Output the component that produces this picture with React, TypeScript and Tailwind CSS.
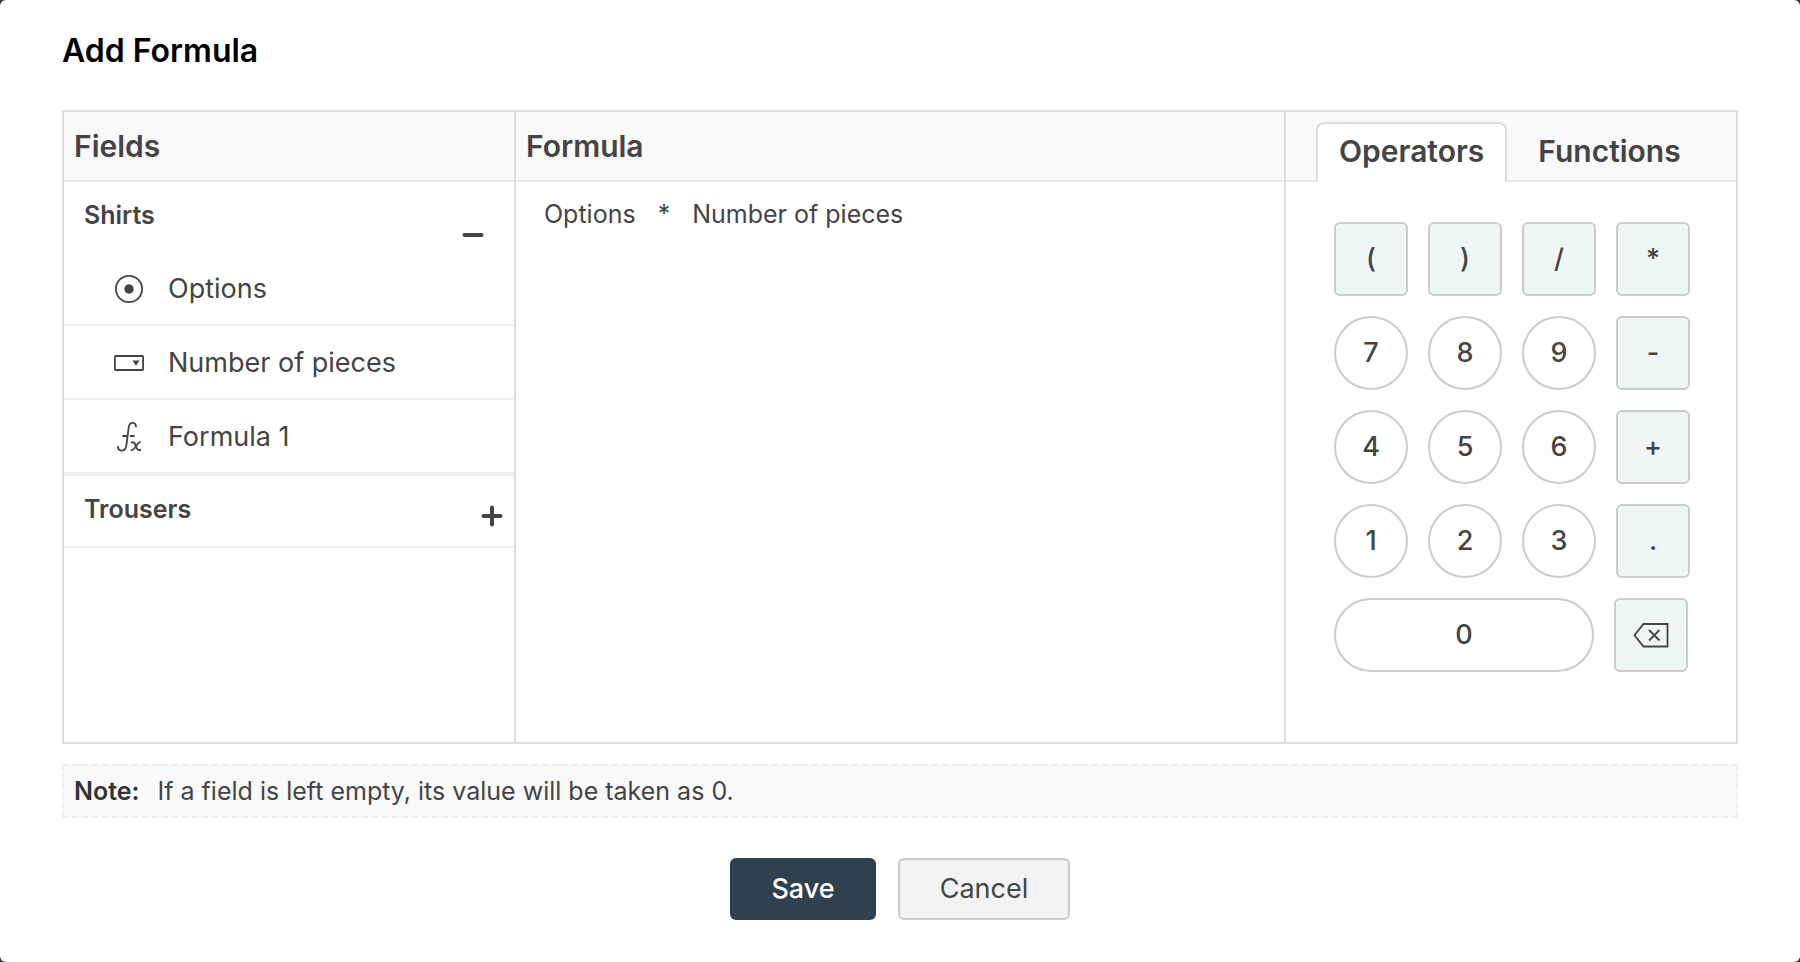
import React, { useState } from 'react';
import clsx from 'clsx';

interface Field {
  name: string;
  icon: React.ReactNode;
}

interface FieldGroup {
  name: string;
  fields: Field[];
}

const RadioIcon = () => (
  <svg width="30" height="30" viewBox="0 0 30 30" fill="none" aria-hidden="true">
    <circle cx="15" cy="15" r="13.1" stroke="currentColor" strokeWidth="1.8" />
    <circle cx="15" cy="15" r="4.7" fill="currentColor" />
  </svg>
);

const DropdownIcon = () => (
  <svg width="30" height="30" viewBox="0 0 30 30" fill="none" aria-hidden="true">
    <rect x="0.9" y="8" width="28.2" height="14" rx="0.8" stroke="currentColor" strokeWidth="1.8" />
    <path d="M18.4 12.4h7.2L22 17.8z" fill="currentColor" />
  </svg>
);

const FormulaIcon = () => (
  <svg width="30" height="30" viewBox="0 0 30 30" fill="none" stroke="currentColor" strokeLinecap="round" aria-hidden="true">
    <path d="M22 4.400c0-2.100-1.300-3.500-3.400-3.500-2.500 0-3.500 1.700-3.900 4.500l-2.200 17c-.5 3.900-1.500 6.200-4.400 6.200-2.600 0-4.100-1.500-4.100-3.900" strokeWidth="1.8" />
    <path d="M9 14h3.800M16.600 14h3.400" strokeWidth="1.800" />
    <path d="M17.800 20.200h1c1.500 0 2 .8 2.500 2.200l1.400 3.600c.5 1.400 1.100 2.100 2.500 2.100h1" strokeWidth="2" />
    <path d="M26.200 20.200c-3.400-.2-4.400 7.900-8.800 7.900" strokeWidth="1.700" />
  </svg>
);

const BackspaceIcon = () => (
  <svg width="36" height="26" viewBox="0 0 36 26" fill="none" stroke="currentColor" strokeWidth="1.8" aria-hidden="true">
    <path d="M10.500 2h24v22.500h-24L1.500 13.200z" />
    <path d="M16 8l10.500 10.500M26.500 8L16 18.500" />
  </svg>
);

const groups: FieldGroup[] = [
  {
    name: 'Shirts',
    fields: [
      { name: 'Options', icon: <RadioIcon /> },
      { name: 'Number of pieces', icon: <DropdownIcon /> },
      { name: 'Formula 1', icon: <FormulaIcon /> },
    ],
  },
  { name: 'Trousers', fields: [] },
];

const keyRows = [
  ['(', ')', '/', '*'],
  ['7', '8', '9', '-'],
  ['4', '5', '6', '+'],
  ['1', '2', '3', '.'],
];

const isDigit = (key: string) => /^\d$/.test(key);

function Key({ label, wide, onClick, children }: { label: string; wide?: boolean; onClick: () => void; children?: React.ReactNode }) {
  return (
    <button
      type="button"
      aria-label={label}
      onClick={onClick}
      className={clsx(
        'flex h-[74px] shrink-0 items-center justify-center border-2 border-[#cccccc] text-[27px] font-medium',
        wide ? 'w-[260px]' : 'w-[74px]',
        isDigit(label) ? 'rounded-full bg-white' : 'rounded-md bg-[#eef7f6]'
      )}
    >
      {children ?? label}
    </button>
  );
}

function GroupSection({ group, open, onToggle, onPick }: { group: FieldGroup; open: boolean; onToggle: () => void; onPick: (name: string) => void }) {
  return (
    <section className="border-b-2 border-[#eeeeee]">
      <button
        type="button"
        aria-expanded={open}
        onClick={onToggle}
        className={clsx('flex h-[70px] w-full items-center justify-between pl-5', open ? 'pr-[30px]' : 'pr-[11px]')}
      >
        <span className="pb-0.5 text-[25px] font-semibold">{group.name}</span>
        <svg width="22" height="22" viewBox="0 0 22 22" className={open ? 'mt-9' : 'mt-2.5'} stroke="currentColor" strokeWidth="4" strokeLinecap="round" aria-hidden="true">
          <path d="M2.500 11h17" />
          {!open && <path d="M11 2.500v17" />}
        </svg>
      </button>
      {open && (
        <ul>
          {group.fields.map((field) => (
            <li key={field.name} className="border-b-2 border-[#eeeeee]">
              <button type="button" onClick={() => onPick(field.name)} className="flex h-[72px] w-full items-center gap-6 pt-0.5 pl-[50px] text-[27px]">
                {field.icon}
                <span>{field.name}</span>
              </button>
            </li>
          ))}
        </ul>
      )}
    </section>
  );
}

export default function App() {
  const [openGroup, setOpenGroup] = useState<string | null>('Shirts');
  const [tab, setTab] = useState('Operators');
  const [tokens, setTokens] = useState<string[]>(['Options', '*', 'Number of pieces']);

  const addToken = (token: string) => setTokens((prev) => [...prev, token]);
  const removeLast = () => setTokens((prev) => prev.slice(0, -1));

  return (
    <div className="min-h-screen bg-[#2f3a45] font-['Inter',sans-serif] text-[#444444]">
      <main className="min-h-screen rounded-[6px] bg-white px-[62px] pt-[30px] pb-[42px]">
        <h1 className="text-[32px] leading-[42px] font-semibold text-black">Add Formula</h1>

        <div className="mt-[38px] flex border-2 border-[#dddddd]">
          <div className="w-[450px] shrink-0">
            <div className="flex h-[70px] items-center border-b-2 border-[#e8e8e8] bg-[#f9f9f9] px-2.5">
              <h2 className="text-[30px] font-semibold">Fields</h2>
            </div>
            {groups.map((group) => (
              <GroupSection
                key={group.name}
                group={group}
                open={openGroup === group.name}
                onToggle={() => setOpenGroup(openGroup === group.name ? null : group.name)}
                onPick={addToken}
              />
            ))}
          </div>

          <div className="min-w-0 flex-1 border-x-2 border-[#dddddd]">
            <div className="flex h-[70px] items-center border-b-2 border-[#e8e8e8] bg-[#f9f9f9] px-2.5">
              <h2 className="text-[30px] font-semibold">Formula</h2>
            </div>
            <div className="flex flex-wrap gap-[22px] px-7 py-4 text-[25px] leading-8">
              {tokens.map((token, i) => (
                <span key={i}>{token}</span>
              ))}
            </div>
          </div>

          <div className="w-[450px] shrink-0">
            <div role="tablist" className="flex h-[70px] items-end gap-2 border-b-2 border-[#e8e8e8] bg-[#f9f9f9] pl-[30px]">
              {['Operators', 'Functions'].map((name) => (
                <button
                  key={name}
                  type="button"
                  role="tab"
                  aria-selected={tab === name}
                  onClick={() => setTab(name)}
                  className={clsx(
                    '-mb-0.5 h-[60px] rounded-t-lg border-2 border-b-0 px-[21px] pb-1 text-[30px] font-semibold',
                    tab === name ? 'border-[#dddddd] bg-white' : 'border-transparent'
                  )}
                >
                  {name}
                </button>
              ))}
            </div>
            <div className="flex flex-col gap-5 pt-10 pb-[70px] pl-12">
              {keyRows.map((row) => (
                <div key={row.join('')} className="flex gap-5">
                  {row.map((key) => (
                    <Key key={key} label={key} onClick={() => addToken(key)} />
                  ))}
                </div>
              ))}
              <div className="flex gap-5">
                <Key label="0" wide onClick={() => addToken('0')} />
                <Key label="Backspace" onClick={removeLast}>
                  <BackspaceIcon />
                </Key>
              </div>
            </div>
          </div>
        </div>

        <p className="mt-5 flex h-[54px] items-center gap-[18px] border-2 border-dashed border-[#eeeeee] bg-[#f9f9f9] px-2.5 pt-0.5 text-[25px]">
          <strong className="font-semibold text-[#333333]">Note:</strong>
          <span>If a field is left empty, its value will be taken as 0.</span>
        </p>

        <div className="mt-10 flex justify-center gap-[22px]">
          <button type="button" className="h-[62px] w-[146px] rounded-md bg-[#2f404f] text-[27px] font-medium text-white">
            Save
          </button>
          <button type="button" className="h-[62px] w-[172px] rounded-md border-2 border-[#cccccc] bg-[#f3f3f3] text-[27px]">
            Cancel
          </button>
        </div>
      </main>
    </div>
  );
}
